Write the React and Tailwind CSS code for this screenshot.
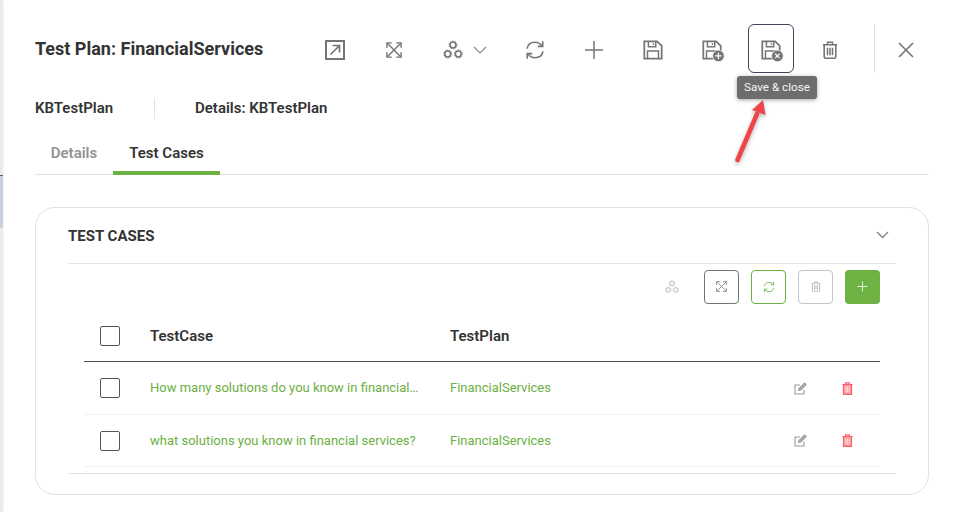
import React from "react";

const G = "#757575";

function Floppy({ color = G, badge }) {
  return (
    <svg width="22" height="22" viewBox="0 0 24 24" fill="none" className="overflow-visible">
      <path d="M2.5 2.5H16.5L21.5 7.5V21.5H2.5Z" stroke={color} strokeWidth="1.9" />
      <path d="M7 2.5V8.5H15V2.5M12.5 4.5V6.5" stroke={color} strokeWidth="1.6" />
      <path d="M6 21.5V13H18V21.5" stroke={color} strokeWidth="1.6" />
      {badge && <circle cx="19" cy="18.5" r="6.4" fill={color} stroke="#fff" strokeWidth="0.8" />}
      {badge === "plus" && <path d="M19 15V22M15.5 18.5H22.5" stroke="#fff" strokeWidth="1.3" />}
      {badge === "x" && <path d="M16.6 16.1L21.4 20.9M21.4 16.1L16.6 20.9" stroke="#fff" strokeWidth="1.2" />}
    </svg>
  );
}

function Trash({ size = 16, color = G }) {
  return (
    <svg width={size} height={size * 1.15} viewBox="0 0 16 18" fill="none">
      <path d="M1 3.5H15M5.5 3.5V1H10.5V3.5" stroke={color} strokeWidth="1.5" />
      <path d="M2.2 3.5V15.5Q2.2 17 3.7 17H12.3Q13.8 17 13.8 15.5V3.5" stroke={color} strokeWidth="1.6" />
      <path d="M5.5 6.5V14M8 6.5V14M10.5 6.5V14" stroke={color} strokeWidth="1.5" />
    </svg>
  );
}

function Expand({ size = 16, color = G, strokeWidth = 1.6 }) {
  return (
    <svg width={size} height={size} viewBox="0 0 18 18" fill="none" stroke={color} strokeWidth={strokeWidth}>
      <path d="M1 6.5V1H6.5M11.5 1H17V6.5M17 11.5V17H11.5M6.5 17H1V11.5" />
      <path d="M1.5 1.5L16.5 16.5M16.5 1.5L1.5 16.5" />
    </svg>
  );
}

function Cogs({ size = 20, color = G, strokeWidth = 1.5 }) {
  const cog = (cx, cy, k) => (
    <g key={k}>
      <circle cx={cx} cy={cy} r="2.9" stroke={color} strokeWidth={strokeWidth} />
      <circle cx={cx} cy={cy} r="4" stroke={color} strokeWidth="1" strokeDasharray="1.3 1.2" />
    </g>
  );
  return (
    <svg width={size} height={size} viewBox="0 0 20 20" fill="none">
      {cog(10, 5, "a")}
      {cog(4.7, 14, "b")}
      {cog(15.3, 14, "c")}
    </svg>
  );
}

function Refresh({ size = 20, color = G, strokeWidth = 1.8 }) {
  return (
    <svg width={size} height={size} viewBox="0 0 22 22" fill="none" stroke={color} strokeWidth={strokeWidth}>
      <path d="M2.2 9.5C3 5.2 6.6 2.5 11 2.5C14.2 2.5 16.8 4 18.5 6.5" />
      <path d="M19.8 12.5C19 16.8 15.4 19.5 11 19.5C7.8 19.5 5.2 18 3.5 15.5" />
      <path d="M19.5 1.5V7H14" />
      <path d="M2.5 20.5V15H8" />
    </svg>
  );
}

function Plus({ size = 20, color = G, strokeWidth = 1.5 }) {
  return (
    <svg width={size} height={size} viewBox="0 0 20 20" fill="none" stroke={color} strokeWidth={strokeWidth}>
      <path d="M10 1V19M1 10H19" />
    </svg>
  );
}

function ToolSlot({ className = "", children }) {
  return <div className={`flex items-center justify-center shrink-0 pt-[3px] ${className}`}>{children}</div>;
}

function Check() {
  return <div className="w-5 h-5 border border-[#555] rounded-[2px] bg-white" />;
}

function Row({ text, height }) {
  return (
    <div className={`flex items-center border-b border-[#f1f1f3] ${height}`}>
      <div className="w-[66px] pl-4 shrink-0"><Check /></div>
      <div className="w-[300px] shrink-0 pr-[30px] text-[13px] text-[#6cb043] whitespace-nowrap">{text}</div>
      <div className="flex-1 text-[13px] text-[#6cb043]">FinancialServices</div>
      <div className="w-[28px] flex justify-center mr-[19px]">
        <svg width="13" height="13" viewBox="0 0 13 13" fill="none" stroke="#9a9a9a" strokeWidth="1.1">
          <path d="M10 7.5V12H1V3H6" />
          <path d="M4.6 8.4L5 6.4L10.6 0.9L12.1 2.4L6.6 8Z" fill="#b0b0b0" />
        </svg>
      </div>
      <div className="w-[28px] flex justify-center mr-[19px]">
        <svg width="11" height="13" viewBox="0 0 11 13" fill="none" stroke="#f8606a" strokeWidth="1.2">
          <path d="M0.5 2.5H10.5M3.5 2.5V0.8H7.5V2.5" />
          <path d="M1.5 2.5V12.4H9.5V2.5Z" fill="#ff9ea3" />
          <path d="M3.8 4.5V10.5M5.5 4.5V10.5M7.2 4.5V10.5" stroke="#ffe0e2" strokeWidth="0.9" />
        </svg>
      </div>
    </div>
  );
}

export default function App() {
  return (
    <div className="relative w-[970px] h-[512px] bg-white overflow-hidden font-['Roboto',sans-serif] text-[#333]">
      {/* page behind the drawer */}
      <div className="absolute left-0 top-0 bottom-0 w-[3px] bg-[#ebebeb] shadow-[0_0_3px_rgba(0,0,0,0.08)]" />
      <div className="absolute left-0 top-[175px] w-[3px] h-[53px] bg-[#c8cfdd] border-t border-[#5a5f70]" />

      <div className="pl-[35px] pr-[41px]">
        {/* Header */}
        <div className="flex items-center h-[98px] pb-[1px]">
          <h1 className="w-[270px] shrink-0 text-[18px] font-bold text-[#333] leading-none">
            Test Plan: FinancialServices
          </h1>
          <div className="flex items-center">
            <ToolSlot className="w-[59px] pl-[1px]">
              <svg width="20" height="20" viewBox="0 0 20 20" fill="none" stroke={G}>
                <rect x="1" y="1" width="18" height="18" strokeWidth="2" />
                <path d="M5.5 14.5L14.5 5.5M7.5 5.5H14.5V12.5" strokeWidth="1.7" />
              </svg>
            </ToolSlot>
            <ToolSlot className="w-[59px]"><Expand /></ToolSlot>
            <ToolSlot className="w-[82px] gap-[10px] pl-[2px]">
              <Cogs />
              <svg width="14" height="8" viewBox="0 0 14 8" fill="none" stroke="#7d8894" strokeWidth="1.1">
                <path d="M1 1L7 7L13 1" />
              </svg>
            </ToolSlot>
            <ToolSlot className="w-[59px]"><Refresh /></ToolSlot>
            <ToolSlot className="w-[59px]"><Plus /></ToolSlot>
            <ToolSlot className="w-[59px]"><Floppy /></ToolSlot>
            <ToolSlot className="w-[59px]"><Floppy badge="plus" /></ToolSlot>
            <div className="relative shrink-0 w-[59px] pl-[7px]">
              <div className="w-[46px] h-[49px] border border-[#3f4659] rounded-[6px] flex items-center justify-center pt-[3px]">
                <Floppy badge="x" />
              </div>
              <div className="absolute left-[-4px] top-[52px] w-[80px] text-center whitespace-nowrap bg-[#6d6d6d] text-[#f4f4f4] text-[11.7px] leading-[23px] h-[23px] rounded-[3px] shadow-[0_1px_4px_rgba(0,0,0,0.35)]">
                Save &amp; close
              </div>
            </div>
            <ToolSlot className="w-[59px]"><Trash /></ToolSlot>
            <div className="w-px h-[49px] bg-[#dbe0e6] ml-[15px] shrink-0" />
            <ToolSlot className="w-[54px] pl-[8px]">
              <svg width="16" height="16" viewBox="0 0 16 16" fill="none" stroke={G} strokeWidth="1.6">
                <path d="M1 1L15 15M15 1L1 15" />
              </svg>
            </ToolSlot>
          </div>
        </div>

        {/* Sub header */}
        <div className="flex items-center h-[21px] text-[15px] font-semibold text-[#333]">
          <div className="w-[119px]">KBTestPlan</div>
          <div className="w-px h-[21px] bg-[#e0e3e9]" />
          <div className="ml-[40px]">Details: KBTestPlan</div>
        </div>

        {/* Tabs */}
        <div className="flex h-[47px] mt-[9px] border-b border-[#e2e2e2] text-[15px] font-semibold">
          <div className="w-[78px] flex justify-center pt-[14px] text-[#929292]">Details</div>
          <div className="w-[107px] flex justify-center pt-[14px] text-[#333] border-b-[4px] border-[#6cb043] h-[47px]">
            Test Cases
          </div>
        </div>

        {/* Card */}
        <div className="mt-[32px] w-[894px] h-[288px] border border-[#dde1e8] rounded-[20px] px-[32px]">
          <div className="flex items-center justify-between h-[56px] border-b border-[#e2e4e9]">
            <div className="pt-[2px] text-[15px] font-bold text-[#333] uppercase">Test Cases</div>
            <svg className="mr-[7px] -translate-y-[1px]" width="13" height="8" viewBox="0 0 13 8" fill="none" stroke="#7f7f7f" strokeWidth="1.3">
              <path d="M1 1L6.5 6.5L12 1" />
            </svg>
          </div>

          {/* Table toolbar */}
          <div className="flex items-center justify-end h-[46px] pr-[16px] mt-[-1px] pt-[1px] gap-[12px]">
            <div className="mr-[13px] flex">
              <Cogs size={14} color="#b3b3b3" strokeWidth={1.1} />
            </div>
            <div className="w-[35px] h-[34px] border border-[#6c757d] rounded-[4px] flex items-center justify-center">
              <Expand size={11} color="#7a7a7a" strokeWidth={1.3} />
            </div>
            <div className="w-[35px] h-[34px] border border-[#6cb043] rounded-[4px] flex items-center justify-center">
              <Refresh size={12} color="#6cb043" strokeWidth={1.6} />
            </div>
            <div className="w-[35px] h-[34px] border border-[#c2c5c9] rounded-[4px] flex items-center justify-center">
              <Trash size={10} color="#bdbdbd" />
            </div>
            <div className="w-[35px] h-[34px] bg-[#6fb244] rounded-[4px] flex items-center justify-center">
              <Plus size={11} color="#fff" strokeWidth={1.4} />
            </div>
          </div>

          {/* Table */}
          <div className="mx-[16px]">
            <div className="flex items-center h-[53px] pt-[2px] border-b border-[#4a4d55] text-[15px] font-semibold text-[#333]">
              <div className="w-[66px] pl-4 shrink-0"><Check /></div>
              <div className="w-[300px] shrink-0">TestCase</div>
              <div className="flex-1">TestPlan</div>
            </div>
            <Row height="h-[53px]" text="How many solutions do you know in financial…" />
            <Row height="h-[52px]" text="what solutions you know in financial services?" />
          </div>
          <div className="mt-[6px] border-b border-[#e2e4e9]" />
        </div>
      </div>

      {/* Annotation arrow */}
      <svg className="absolute left-[728px] top-[98px] drop-shadow-[0_2px_2px_rgba(0,0,0,0.3)]" width="44" height="70" viewBox="0 0 44 70" fill="none">
        <path d="M9.5 62L29 16" stroke="#f0444a" strokeWidth="4.5" strokeLinecap="round" />
        <path d="M35 2L37.5 17L24 12Z" fill="#f0444a" />
      </svg>
    </div>
  );
}
